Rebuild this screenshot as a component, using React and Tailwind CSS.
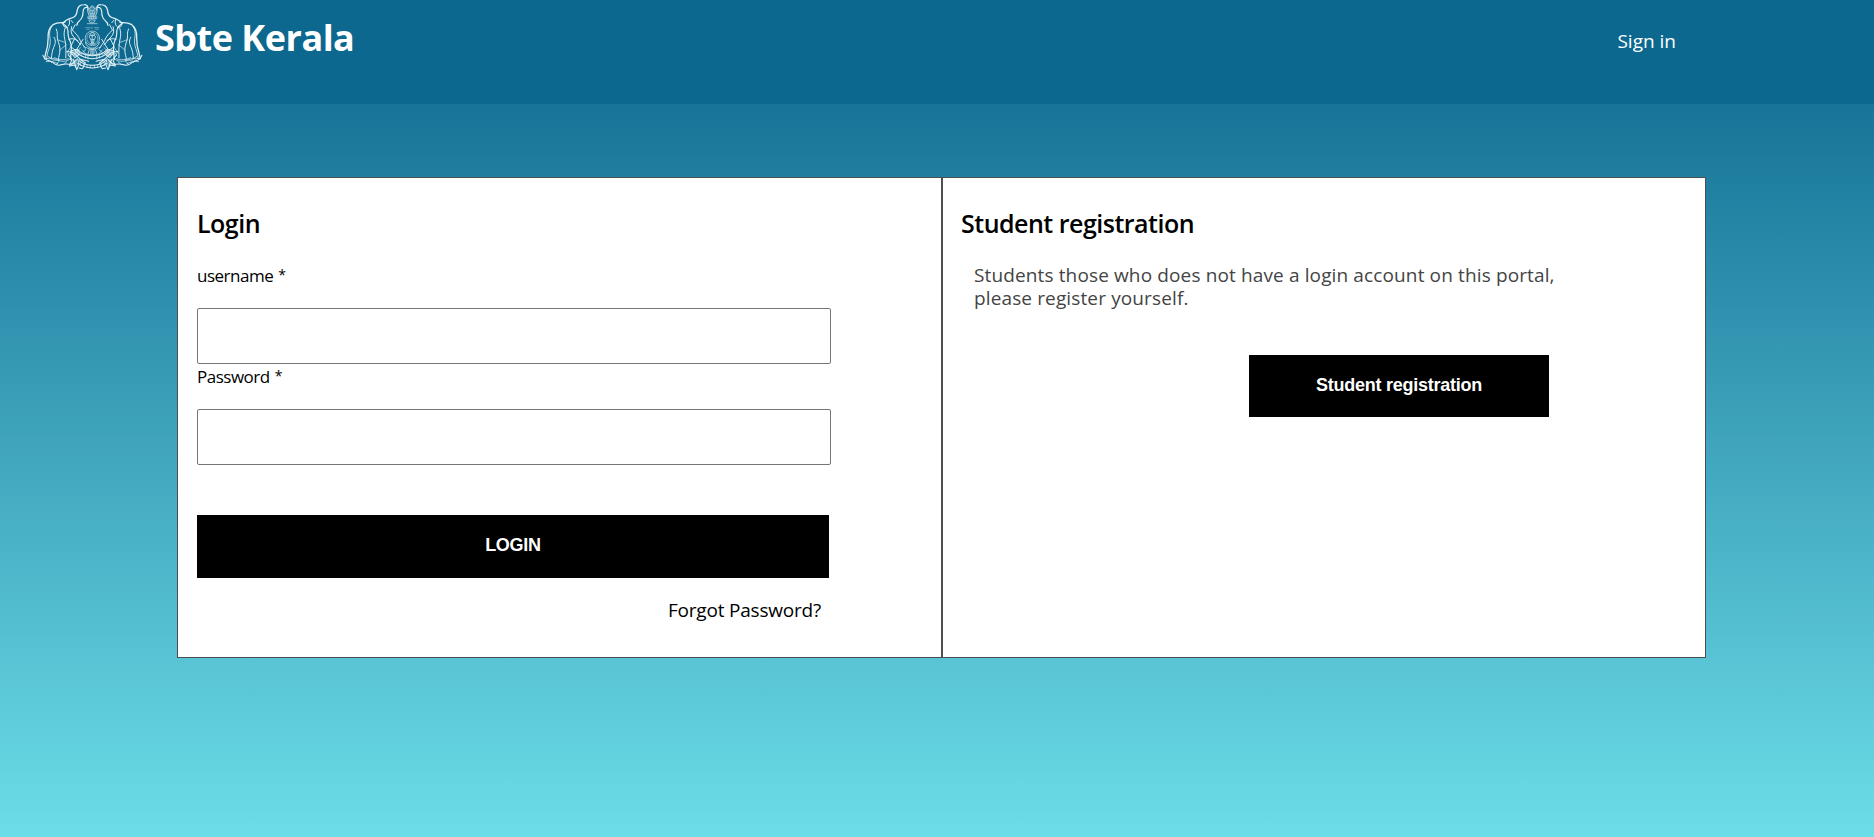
function Emblem() {
  return (
    <svg
      className="h-[74px] w-[110px] shrink-0"
      viewBox="0 0 330 222"
      fill="none"
      stroke="#e2f0f5"
      strokeWidth="2.9"
      strokeLinecap="round"
      strokeLinejoin="round"
      aria-hidden="true"
    >
      <defs>
        <g id="elephant">
          {/* trunk, head and tusk */}
          <path d="M153 30c1-10-3-17-12-16-12 0-19 7-21 17-1 10-3 16-10 20-7 4-17 5-22 9-6 3-10 6-13 11" strokeWidth="4" />
          <path d="M151 22c-8-1-12 3-13 13 0 13-4 21-11 27-5 4-9 8-8 14" strokeWidth="3.6" />
          <path d="M95 58c3 8 2 15-2 20M84 66l-9 4 5 10 10 2M101 61l6 7M114 74l-9 16" />
          {/* back, rump and legs */}
          <path d="M78 68c-12-1-22 0-32 6-11 8-16 22-15 40 0 16-1 27-7 44l-4 17" strokeWidth="4" />
          <path d="M42 79c-7 10-8 22-5 37 2 13-1 24-7 40l-4 19" strokeWidth="2.4" />
          <path d="M56 87c6 12 1 21 4 32 4 12 8 22 7 34 0 10-5 16-4 26" />
          <path d="M49 112c7 10 4 20-1 30-4 10-6 20-7 33" />
          <path d="M78 72c12 8 15 18 14 30 0 12 7 20 9 31 3 14 0 28-2 46" strokeWidth="3.6" />
          <path d="M83 84c-4 12-4 22-1 34 3 14 4 28 3 55M103 80c-3 12-2 20 4 28l24 27" />
          <path d="M106 91c9 9 17 16 23 30 5 10 10 16 16 22M94 118c10-3 18-3 28 4M112 116l-12 24 16 12 22-34" />
          <path d="M101 140l-12 18 21 8 20-23M67 150l20-16M60 119l21 8" strokeWidth="2" />
        </g>
        <g id="scroll">
          <path d="M15 166c4 8 5 11 12 14 8 3 18 4 23 11 7 6 18 5 27 2 8-2 19 0 27 0l14-14" strokeWidth="3.2" />
          <path d="M20 177c16-4 27-3 39 3 14 6 28 6 42-5M25 185c16-2 24 0 36 6M31 169l14 11 20 1M50 173c14 7 28 8 43 3M42 188l-7-8M56 194l8-10M78 194l10-9" strokeWidth="2.2" />
          <path d="M88 154l20 4 22 20 25 6M92 164l12 14-8 20 17-3 6 14 7-18-5-15M108 178l7 19M100 193l13-8M126 204l10 2M127 177l18 12-8 16" strokeWidth="3.2" />
          <path d="M100 153l17-5 13 13-16 12z" fill="#e2f0f5" fillOpacity="0.5" />
          <path d="M104 180l14-2 5 14-7 13-8-11z" fill="#e2f0f5" fillOpacity="0.4" stroke="none" />
          <path d="M115 155c13 13 28 20 51 21M121 148c11 13 25 18 45 19M125 181c12 11 25 15 41 15M122 190c13 9 27 13 44 14" strokeWidth="3.2" />
          <path d="M135 149l12 13 19 3M139 140l8 8-9 8M145 165v9M153 167v10M134 158v8M130 188v8M140 192v9M150 194v9M160 196v8" strokeWidth="2" />
        </g>
      </defs>
      <g transform="translate(6 0) scale(.98 1)">
        <use href="#elephant" />
        <use href="#elephant" transform="matrix(-1 0 0 1 333 0)" />
        <use href="#scroll" />
        <use href="#scroll" transform="matrix(-1 0 0 1 333 0)" />
        {/* lion capital */}
        <path d="M157 20h19l6 14-5 16h-21l-5-16z" fill="#a9cddc" fillOpacity="0.3" stroke="none" />
        <g strokeWidth="2.6" stroke="#a9cddc">
          <path d="M159 24c2-5 12-5 14 0l-2 8h-10zM153 33c-4-4 0-11 5-7M179 33c4-4 0-11-5-7M152 34l5 15h19l5-15M158 34l4 14M174 34l-4 14M166 32v16M160 41h12M151 51h30M153 56h26M156 51v5M163 51v5M170 51v5M177 51v5M157 60h18l-3 7h-12zM151 71h30M162 20l4-3 4 3" />
        </g>
        <path d="M146 83h14M172 83h14M149 88h8M176 88h8M165 81v5" strokeWidth="2" stroke="#8fbbce" />
        {/* conch shield */}
        <g stroke="#b8d6e2">
          <circle cx="166.500" cy="115" r="22" strokeWidth="2.4" />
          <circle cx="166.500" cy="115" r="17" strokeWidth="2" strokeDasharray="4 3" />
          <path d="M166 97c-7 3-9 6-3 9h8c5-3 2-6-5-9zM158 108c3-4 14-4 17 0 3 6-2 11-8 11s-12-5-9-11zM166 107v22M162 118l2 11h6l2-11M160 132h14M145 127c3 11 10 17 21 18 12-1 18-7 22-18M149 143c8 7 27 7 35 0M162 145v20M171 145v20M166 148v16M157 149l-4 13M176 149l4 13" />
        </g>
      </g>
    </svg>
  );
}

function Field({ id, label, type, className }) {
  return (
    <div className={className}>
      <label htmlFor={id} className="flex h-[45px] gap-[5px] text-[17px] leading-[25px] tracking-[-0.5px]">
        <span>{label}</span>
        <span className="text-[14px] leading-[23px]">*</span>
      </label>
      <input
        id={id}
        type={type}
        className="block h-14 w-[634px] rounded-[2px] border border-[#767676] bg-white px-3 outline-none"
      />
    </div>
  );
}

export default function App() {
  return (
    <div className="flex h-[837px] w-full flex-col overflow-hidden bg-linear-to-b from-[#04678d] to-[#6cdee8] font-['Open_Sans','Noto_Sans',sans-serif] text-black">
      <header className="flex h-[104px] shrink-0 items-start justify-between bg-[#0c688f] pr-[198px] pl-9 text-white">
        <div className="flex">
          <Emblem />
          <h1 className="pt-[13px] pl-[9px] text-[36px] leading-[49px] font-bold tracking-[-0.5px] whitespace-nowrap">
            Sbte Kerala
          </h1>
        </div>
        <a href="#signin" className="mt-[27px] text-[19px] leading-[28px] font-medium whitespace-nowrap">
          Sign in
        </a>
      </header>

      <main className="mt-[73px] ml-[177px] flex h-[481px] w-[1529px] shrink-0">
        <section className="w-[765px] border border-[#4b4f52] bg-white pl-[19px]">
          <h2 className="mt-[28px] text-[25px] leading-[34px] font-semibold tracking-[-0.5px]">Login</h2>
          <Field id="username" label="username" type="text" className="mt-[23px]" />
          <Field id="password" label="Password" type="password" />
          <button className="mt-[50px] block h-[63px] w-[632px] bg-black pb-[3px] font-['Liberation_Sans',Arial,sans-serif] text-[18px] leading-5 font-bold tracking-[-0.25px] text-white">
            LOGIN
          </button>
          <div className="mt-[18px] w-[624px] text-right text-[19px] leading-[28px] tracking-[-0.2px]">
            <a href="#forgot">Forgot Password?</a>
          </div>
        </section>
        <section className="w-[764px] border border-[#4b4f52] bg-white pl-[18px]">
          <h2 className="mt-[28px] text-[25px] leading-[34px] font-semibold tracking-[-0.5px]">
            Student registration
          </h2>
          <p className="mt-[24px] ml-[13px] text-[19px] leading-[23px] tracking-[0.13px] whitespace-nowrap text-[#444]">
            Students those who does not have a login account on this portal,
            <br />
            please register yourself.
          </p>
          <button className="mt-[45px] ml-[288px] block h-[62px] w-[300px] bg-black pb-[3px] font-['Liberation_Sans',Arial,sans-serif] text-[18px] leading-5 font-bold tracking-[-0.25px] text-white">
            Student registration
          </button>
        </section>
      </main>
    </div>
  );
}
